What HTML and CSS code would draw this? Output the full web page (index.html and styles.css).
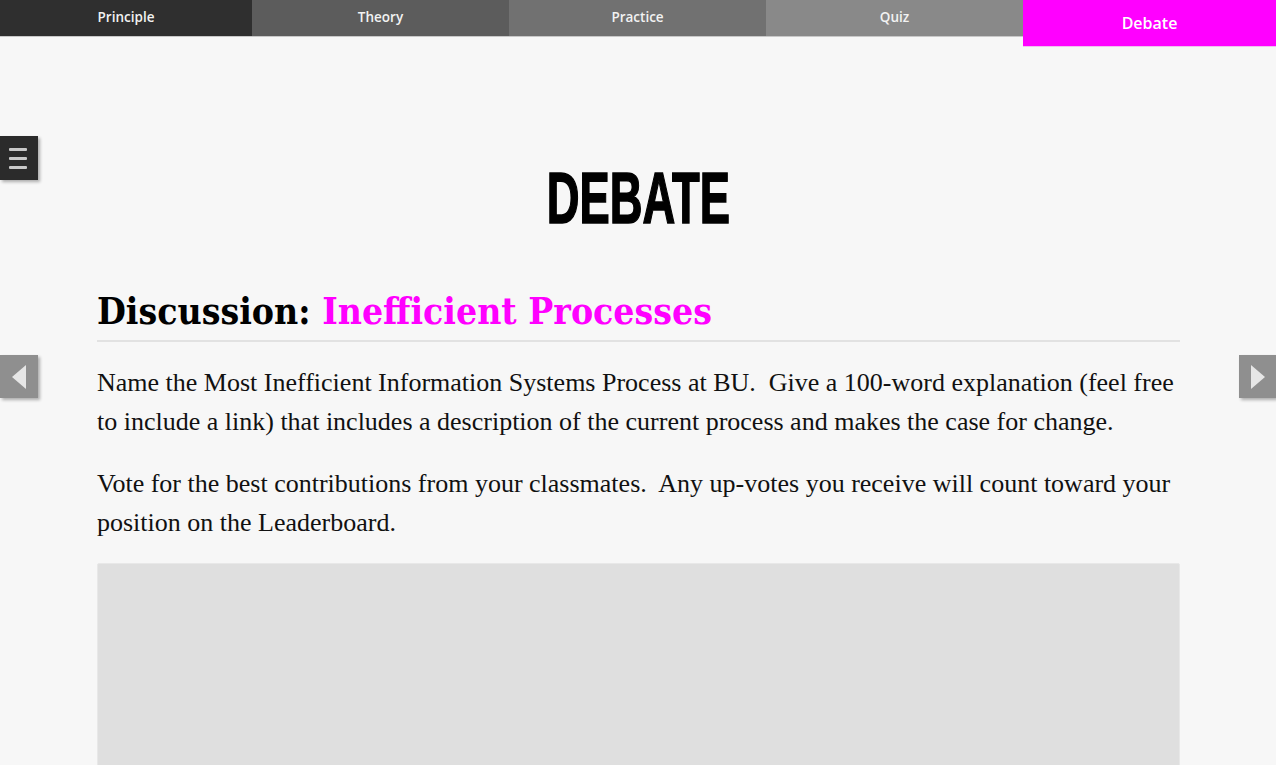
FILE: index.html
```html
<!DOCTYPE html>
<html>
<head>
<meta charset="utf-8">
<link rel="stylesheet" href="styles.css">
</head>
<body>
<nav class="tabs">
  <a class="tab tab-1">Principle</a>
  <a class="tab tab-2">Theory</a>
  <a class="tab tab-3">Practice</a>
  <a class="tab tab-4">Quiz</a>
  <a class="tab tab-active">Debate</a>
</nav>

<button class="menu-btn" aria-label="Menu">
  <span class="bar"></span><span class="bar"></span><span class="bar"></span>
</button>
<button class="arrow arrow-left" aria-label="Previous">
  <svg width="16" height="26" viewBox="0 0 16 26"><polygon points="15,1 15,25 1,13" fill="#e6e6e6"/></svg>
</button>
<button class="arrow arrow-right" aria-label="Next">
  <svg width="16" height="26" viewBox="0 0 16 26"><polygon points="1,1 1,25 15,13" fill="#e6e6e6"/></svg>
</button>

<main class="content">
  <h1 class="page-title"><span class="page-title-text">DEBATE</span></h1>
  <h2 class="discussion-title">Discussion: <span class="accent">Inefficient Processes</span></h2>
  <p class="copy">Name the Most Inefficient Information Systems Process at BU.&nbsp; Give a 100-word explanation (feel free to include a link) that includes a description of the current process and makes the case for change.</p>
  <p class="copy">Vote for the best contributions from your classmates.&nbsp; Any up-votes you receive will count toward your position on the Leaderboard.</p>
  <div class="panel"></div>
</main>
</body>
</html>
```

FILE: styles.css
```css
html, body {
  margin: 0;
  padding: 0;
  background: #f7f7f7;
  overflow: hidden;
}
body {
  font-family: "Liberation Serif", serif;
  color: #111;
}
.tabs {
  display: flex;
  align-items: flex-start;
  height: 36px;
  position: relative;
  z-index: 2;
}
.tab {
  display: flex;
  align-items: center;
  justify-content: center;
  height: 37px;
  width: 257px;
  font-family: "Open Sans", sans-serif;
  font-weight: 600;
  font-size: 13.5px;
  color: #f2f2f2;
  border-bottom: 1px solid #c8c8c8;
  box-sizing: border-box;
  padding-bottom: 2px;
}
.tab-1 { background: #2f2f2f; width: 252px; }
.tab-2 { background: #5c5c5c; }
.tab-3 { background: #717171; }
.tab-4 { background: #898989; }
.tab-active {
  background: #ff00ff;
  height: 47px;
  width: 253px;
  font-size: 16px;
  color: #fff;
  border-bottom: 1px solid #f0c0f0;
  padding: 0;
}
.menu-btn {
  position: fixed;
  left: 0;
  top: 136px;
  width: 38px;
  height: 44px;
  background: #2b2b2b;
  border: none;
  padding: 0;
  display: flex;
  flex-direction: column;
  align-items: center;
  justify-content: center;
  gap: 6px;
  box-shadow: 2px 2px 3px rgba(0,0,0,0.3);
}
.bar {
  display: block;
  width: 18px;
  height: 3px;
  background: #c9c9c9;
  border-radius: 1px;
  margin-left: -2px;
}
.arrow {
  position: fixed;
  top: 355px;
  width: 38px;
  height: 43px;
  background: #8f8f8f;
  border: none;
  padding: 0;
  display: flex;
  align-items: center;
  justify-content: center;
  box-shadow: 2px 2px 3px rgba(0,0,0,0.3);
}
.arrow-left { left: 0; }
.arrow-right { right: 0; width: 37px; }
.content {
  margin: 0 96px 0 97px;
}
.page-title {
  margin: 0;
  padding-top: 122px;
  text-align: center;
  font-family: "Liberation Sans", sans-serif;
  font-weight: 700;
  font-size: 72px;
  line-height: 80px;
  color: #000;
}
.page-title-text {
  display: inline-block;
  transform: scaleX(0.63);
  -webkit-text-stroke: 1.6px #000;
}
.discussion-title {
  margin: 48px 0 0;
  padding-bottom: 4px;
  border-bottom: 2px solid #e2e2e2;
  font-family: "DejaVu Serif", serif;
  font-stretch: semi-condensed;
  font-weight: 700;
  font-size: 37px;
  line-height: 50px;
  color: #000;
}
.accent { color: #ff00ff; }
.copy {
  margin: 21px 0 0;
  font-size: 26px;
  line-height: 39px;
  color: #111;
}
.copy + .copy { margin-top: 23px; }
.panel {
  margin-top: 21px;
  height: 260px;
  background: #dfdfdf;
  border: 1px solid #e8e8e8;
  border-radius: 2px;
}
```
